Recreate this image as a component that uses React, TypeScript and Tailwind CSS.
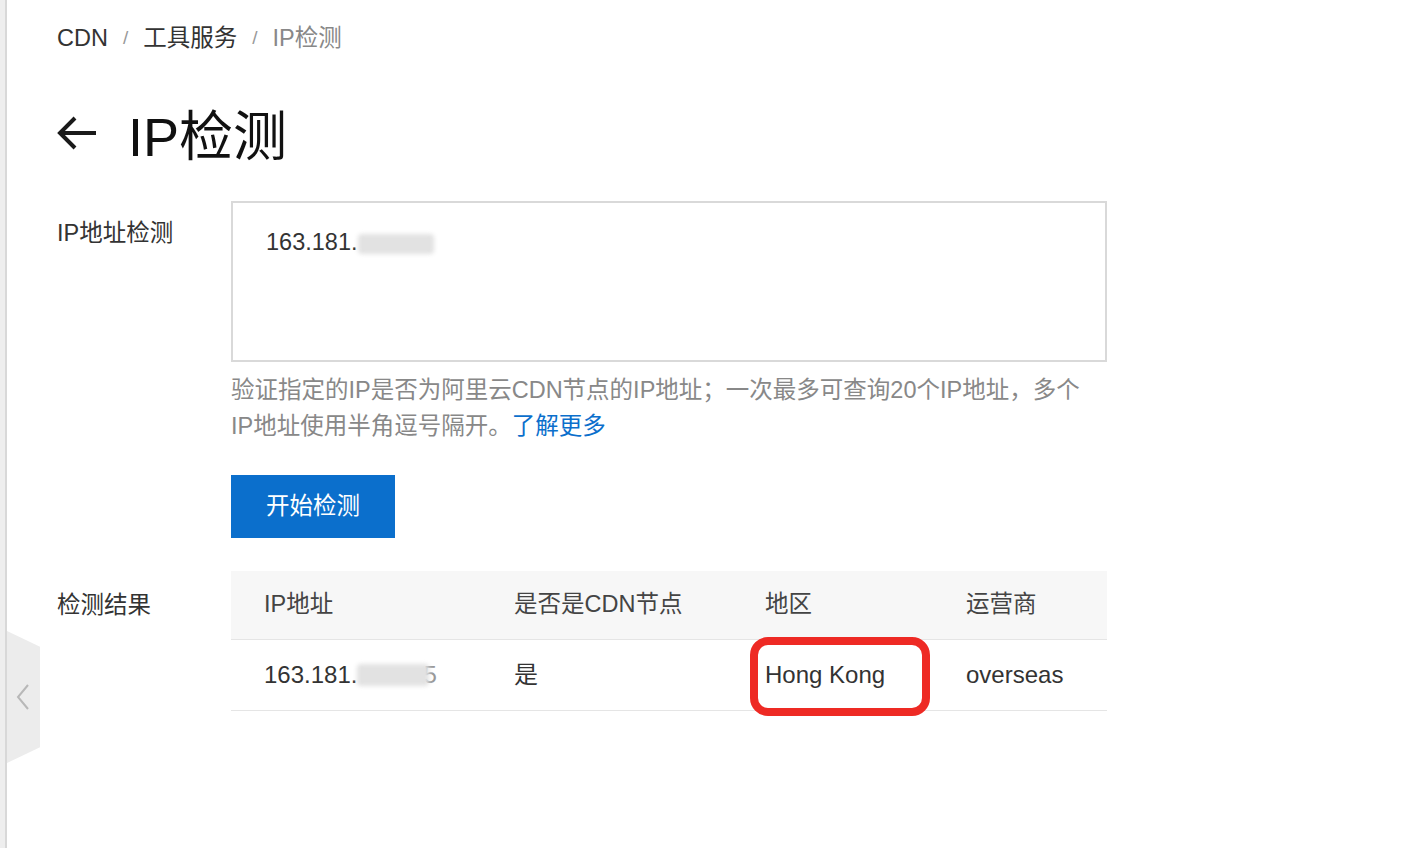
import React from 'react';

const font = { fontFamily: '"Liberation Sans", "Noto Sans CJK SC", sans-serif' };

const Blur: React.FC<{ className?: string }> = ({ className }) => (
  <span className={`inline-block align-middle rounded-sm bg-[#e2e2e2] blur-[2px] ${className ?? ''}`} />
);

const columns = ['IP地址', '是否是CDN节点', '地区', '运营商'];

const App: React.FC = () => {
  return (
    <div className="relative min-h-[848px] w-full bg-white text-[23.5px] text-[#333]" style={font}>
      {/* left frame edge */}
      <div className="absolute left-0 top-0 h-full w-[7px] border-r-2 border-[#d8d8d8] bg-[#eeeeee]" />
      {/* collapse handle */}
      <div className="absolute left-[7px] top-[631px] flex h-[132px] w-[33px] items-center justify-center bg-[#ececec] [clip-path:polygon(0_0,100%_12%,100%_88%,0_100%)]">
        <svg width="14" height="26" viewBox="0 0 14 26" fill="none" stroke="#b8b8b8" strokeWidth="2" className="mr-[2px]">
          <path d="M12 1L2 13L12 25" />
        </svg>
      </div>

      <div className="pl-[57px] pt-[21px]">
        {/* breadcrumb */}
        <div className="flex items-center leading-[34px]">
          <span>CDN</span>
          <span className="mx-[15px] text-[19px] text-[#999]">/</span>
          <span>工具服务</span>
          <span className="mx-[15px] text-[19px] text-[#999]">/</span>
          <span className="text-[#888]">IP检测</span>
        </div>

        {/* title */}
        <div className="mt-[50px] flex items-center">
          <svg width="40" height="34" viewBox="0 0 40 34" className="mt-[-8px]" fill="none" stroke="#1a1a1a" strokeWidth="4" strokeLinecap="butt" strokeLinejoin="miter">
            <path d="M3 17H39" />
            <path d="M18 2L3 17L18 32" />
          </svg>
          <h1 className="ml-[31px] text-[54px] leading-[64px] text-[#111]">IP检测</h1>
        </div>

        {/* form */}
        <div className="mt-[32px] flex">
          <div className="w-[174px] pt-[15px] leading-[34px]">IP地址检测</div>
          <div className="w-[876px]">
            <div className="h-[161px] border-2 border-[#d9d9d9] bg-white px-[33px] pt-[22px] leading-[34px]">
              163.181.<Blur className="ml-[1px] h-[20px] w-[76px]" />
            </div>
            <p className="mt-[10px] whitespace-nowrap leading-[36px] text-[#888]">
              验证指定的IP是否为阿里云CDN节点的IP地址；一次最多可查询20个IP地址，多个
              <br />
              IP地址使用半角逗号隔开。<a className="text-[#0b6fcc]">了解更多</a>
            </p>
            <button className="mt-[31px] h-[63px] w-[164px] bg-[#0b6fcc] text-white">开始检测</button>
          </div>
        </div>

        {/* result */}
        <div className="mt-[33px] flex">
          <div className="w-[174px] pt-[17px] leading-[34px]">检测结果</div>
          <div className="relative w-[876px]">
            <div className="grid h-[69px] grid-cols-[250px_251px_201px_1fr] items-center border-b border-[#e5e5e5] bg-[#f7f7f7] text-[#444]">
              {columns.map((c) => (
                <div key={c} className="pl-[33px]">{c}</div>
              ))}
            </div>
            <div className="grid h-[71px] grid-cols-[250px_251px_201px_1fr] items-center border-b border-[#e5e5e5] text-[24px]">
              <div className="flex items-center whitespace-nowrap pl-[33px]">
                163.181.<Blur className="h-[22px] w-[72px]" />
                <span className="-ml-[6px] text-[#999]">5</span>
              </div>
              <div className="pl-[33px]">是</div>
              <div className="pl-[33px]">Hong Kong</div>
              <div className="pl-[33px]">overseas</div>
            </div>
            {/* highlight annotation */}
            <div className="absolute left-[519px] top-[66px] h-[79px] w-[180px] rounded-[18px] border-solid border-[#ee2a24] [border-width:8px]" />
          </div>
        </div>
      </div>
    </div>
  );
};

export default App;
